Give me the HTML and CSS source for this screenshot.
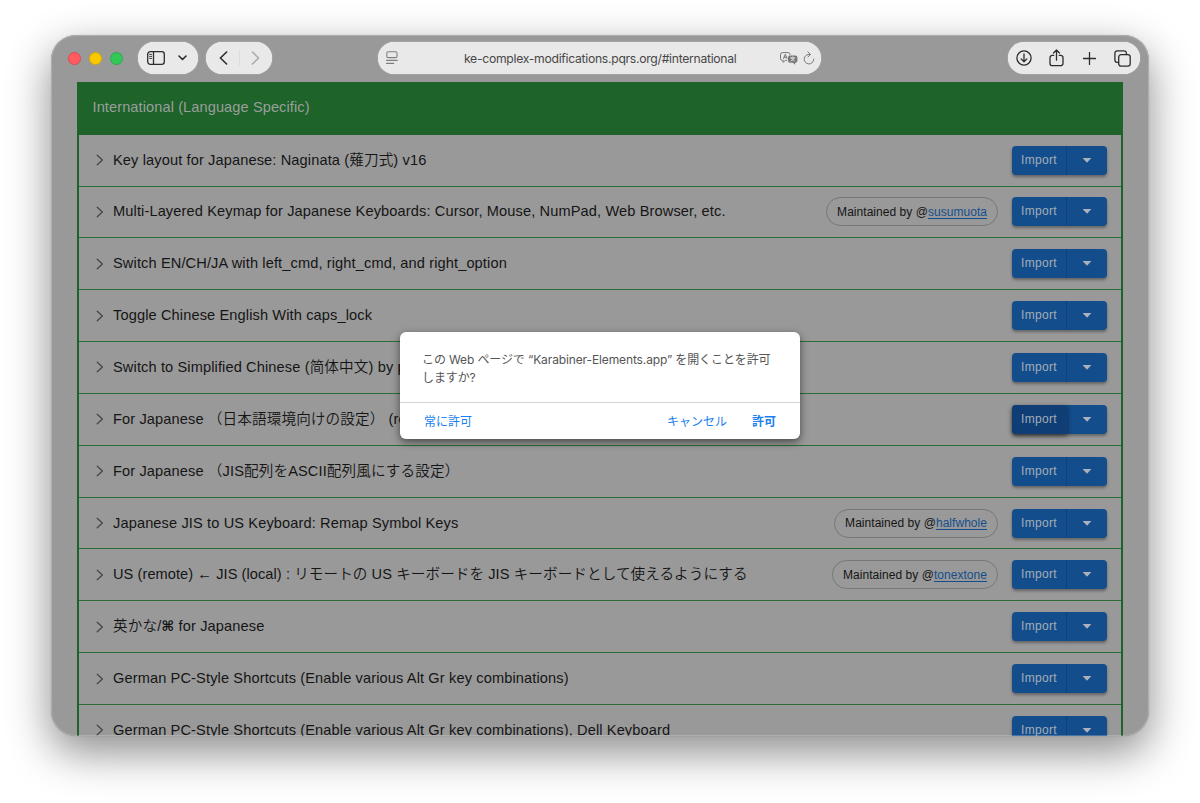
FILE: index.html
```
<!DOCTYPE html>
<html lang="ja">
<head>
    <meta charset="UTF-8">
    <meta name="viewport" content="width=device-width, initial-scale=1.0">
    <title>Karabiner-Elements complex modifications</title>
    <link rel="stylesheet" href="styles.css">
</head>
<body>
    <svg class="sprite" aria-hidden="true">
        <symbol id="chevron" viewBox="0 0 8 12">
            <path d="M1.2 1.2 6.4 6l-5.2 4.8" />
        </symbol>
        <symbol id="caret" viewBox="0 0 10 5">
            <path d="M0.6 0h8.8L5 4.7z" />
        </symbol>
    </svg>

    <div class="window">
        <div class="toolbar">
            <div class="lights">
                <span class="light red"></span>
                <span class="light yellow"></span>
                <span class="light green"></span>
            </div>
            <div class="pill sidebar-pill">
                <svg width="18" height="14" viewBox="0 0 18 14">
                    <rect x="0.7" y="0.7" width="16.6" height="12.6" rx="2.6" />
                    <path d="M6.5 1v12" />
                    <path class="thin" d="M2.6 3.4h2M2.6 5.4h2M2.6 7.4h2" />
                </svg>
                <svg width="9" height="6" viewBox="0 0 9 6"><path class="bold" d="M1 1l3.5 3.5L8 1" /></svg>
            </div>
            <div class="pill nav-pill">
                <svg width="9" height="14" viewBox="0 0 9 14"><path class="bold" d="M7.6 1 1.4 7l6.2 6" /></svg>
                <span class="nav-divider"></span>
                <svg class="disabled" width="9" height="14" viewBox="0 0 9 14"><path class="bold" d="M1.4 1l6.2 6-6.2 6" /></svg>
            </div>
            <div class="pill address">
                <svg class="reader" width="12" height="14" viewBox="0 0 12 14">
                    <rect x="0.8" y="0.8" width="10.2" height="5.8" rx="1.4" />
                    <path d="M0.5 9.4h10.8M0.5 12.4h7.2" />
                </svg>
                <span class="url">ke-complex-modifications.pqrs.org/#international</span>
                <div class="address-icons">
                    <svg width="18" height="13" viewBox="0 0 18 13">
                        <path d="M6.6 8.4H5.2L3.2 10.4V8.4H2.4A1.9 1.9 0 0 1 .5 6.5v-4A1.9 1.9 0 0 1 2.4.6h5.8a1.9 1.9 0 0 1 1.9 1.9M3.6 6.5l1.7-4.2L7 6.5M4.2 5.2h2.2" />
                        <path class="solid" d="M10 3.4h5.4a2 2 0 0 1 2 2v3.4a2 2 0 0 1-2 2h-.3v1.9l-2.2-1.9H10a2 2 0 0 1-2-2V5.4a2 2 0 0 1 2-2z" />
                        <path class="knockout" d="M10.6 5.9h4.2M12.7 5v.9M14 6.1c-.5 1.3-1.6 2.3-3 2.8M11.4 6.1c.5 1.3 1.6 2.3 3 2.8" />
                    </svg>
                    <svg width="12" height="14" viewBox="0 0 12 14">
                        <path d="M6.8 3.4A4.8 4.8 0 1 0 10.8 8.1M4.9.9l2.600 2.500L5 5.900" />
                    </svg>
                </div>
            </div>
            <div class="pill actions">
                <svg width="16" height="16" viewBox="0 0 16 16">
                    <circle cx="8" cy="8" r="7.1" />
                    <path d="M8 4v7.6M5.1 8.900 8 11.800l2.900-2.900" />
                </svg>
                <svg width="15" height="18" viewBox="0 0 15 18">
                    <path d="M4.8 6.3H3.3A2.3 2.3 0 0 0 1 8.6v5.8a2.3 2.3 0 0 0 2.3 2.3h8.4a2.3 2.3 0 0 0 2.3-2.3V8.6a2.3 2.3 0 0 0-2.3-2.3h-1.5M7.5 11.2V1.2M4.5 4l3-3 3 3" />
                </svg>
                <svg width="13" height="13" viewBox="0 0 13 13"><path d="M6.5.5v12M.5 6.5h12" /></svg>
                <svg width="17" height="17" viewBox="0 0 17 17">
                    <rect x="4.7" y="4.7" width="11.5" height="11.5" rx="2.4" />
                    <path d="M4.5 12.3H3.2A2.3 2.3 0 0 1 .9 10V3.2A2.3 2.3 0 0 1 3.2.9h6.9a2.3 2.3 0 0 1 2.3 2.3v1.3" />
                </svg>
            </div>
        </div>

        <div class="category">
            <div class="category-title">International (Language Specific)</div>
            <div class="row">
                <svg class="chevron"><use href="#chevron" /></svg>
                <span class="title">Key layout for Japanese: Naginata (薙刀式) v16</span>
                <div class="btn-group"><span class="import">Import</span><span class="more"><svg><use href="#caret" /></svg></span></div>
            </div>
            <div class="row">
                <svg class="chevron"><use href="#chevron" /></svg>
                <span class="title">Multi-Layered Keymap for Japanese Keyboards: Cursor, Mouse, NumPad, Web Browser, etc.</span>
                <span class="chip">Maintained by @<a>susumuota</a></span>
                <div class="btn-group"><span class="import">Import</span><span class="more"><svg><use href="#caret" /></svg></span></div>
            </div>
            <div class="row">
                <svg class="chevron"><use href="#chevron" /></svg>
                <span class="title">Switch EN/CH/JA with left_cmd, right_cmd, and right_option</span>
                <div class="btn-group"><span class="import">Import</span><span class="more"><svg><use href="#caret" /></svg></span></div>
            </div>
            <div class="row">
                <svg class="chevron"><use href="#chevron" /></svg>
                <span class="title">Toggle Chinese English With caps_lock</span>
                <div class="btn-group"><span class="import">Import</span><span class="more"><svg><use href="#caret" /></svg></span></div>
            </div>
            <div class="row">
                <svg class="chevron"><use href="#chevron" /></svg>
                <span class="title">Switch to Simplified Chinese (简体中文) by p</span>
                <div class="btn-group"><span class="import">Import</span><span class="more"><svg><use href="#caret" /></svg></span></div>
            </div>
            <div class="row">
                <svg class="chevron"><use href="#chevron" /></svg>
                <span class="title">For Japanese （日本語環境向けの設定） (re</span>
                <div class="btn-group"><span class="import active">Import</span><span class="more"><svg><use href="#caret" /></svg></span></div>
            </div>
            <div class="row">
                <svg class="chevron"><use href="#chevron" /></svg>
                <span class="title">For Japanese （JIS配列をASCII配列風にする設定）</span>
                <div class="btn-group"><span class="import">Import</span><span class="more"><svg><use href="#caret" /></svg></span></div>
            </div>
            <div class="row">
                <svg class="chevron"><use href="#chevron" /></svg>
                <span class="title">Japanese JIS to US Keyboard: Remap Symbol Keys</span>
                <span class="chip">Maintained by @<a>halfwhole</a></span>
                <div class="btn-group"><span class="import">Import</span><span class="more"><svg><use href="#caret" /></svg></span></div>
            </div>
            <div class="row">
                <svg class="chevron"><use href="#chevron" /></svg>
                <span class="title tight">US (remote) ← JIS (local) : リモートの US キーボードを JIS キーボードとして使えるようにする</span>
                <span class="chip">Maintained by @<a>tonextone</a></span>
                <div class="btn-group"><span class="import">Import</span><span class="more"><svg><use href="#caret" /></svg></span></div>
            </div>
            <div class="row">
                <svg class="chevron"><use href="#chevron" /></svg>
                <span class="title">英かな/<span class="key">⌘</span> for Japanese</span>
                <div class="btn-group"><span class="import">Import</span><span class="more"><svg><use href="#caret" /></svg></span></div>
            </div>
            <div class="row">
                <svg class="chevron"><use href="#chevron" /></svg>
                <span class="title">German PC-Style Shortcuts (Enable various Alt Gr key combinations)</span>
                <div class="btn-group"><span class="import">Import</span><span class="more"><svg><use href="#caret" /></svg></span></div>
            </div>
            <div class="row">
                <svg class="chevron"><use href="#chevron" /></svg>
                <span class="title">German PC-Style Shortcuts (Enable various Alt Gr key combinations), Dell Keyboard</span>
                <div class="btn-group"><span class="import">Import</span><span class="more"><svg><use href="#caret" /></svg></span></div>
            </div>
        </div>

        <div class="dialog">
            <p class="message"><span class="line">この Web ページで “Karabiner-Elements.app” を開くことを許可</span><span class="line">しますか?</span></p>
            <div class="dialog-buttons">
                <span class="always">常に許可</span>
                <span class="cancel">キャンセル</span>
                <span class="allow">許可</span>
            </div>
        </div>
    </div>
</body>
</html>
```
FILE: styles.css
```
* {
    box-sizing: border-box;
}

body {
    margin: 0;
    padding: 35px 51px 0;
    height: 803px;
    overflow: hidden;
    background-color: #fff;
    font-family: "Liberation Sans", "Noto Sans CJK JP", sans-serif;
}

.sprite {
    position: absolute;
    width: 0;
    height: 0;
}

svg {
    fill: none;
    stroke-linecap: round;
    stroke-linejoin: round;
    flex: none;
}

.window {
    position: relative;
    width: 1098px;
    height: 701px;
    overflow: hidden;
    border-radius: 25px;
    background-color: #999;
    box-shadow: 0 0 1px rgba(0, 0, 0, 0.3), 0 16px 44px rgba(0, 0, 0, 0.46);
}

/* edge highlight of the window */
.window::after {
    content: "";
    position: absolute;
    inset: 0;
    border-radius: 25px;
    box-shadow: inset 0 0 0 1px rgba(255, 255, 255, 0.22);
    pointer-events: none;
}

.toolbar {
    display: flex;
    align-items: center;
    height: 47px;
    padding: 0 9px 1px 17px;
}

.lights {
    display: flex;
    gap: 8px;
    margin-right: 15px;
}

.light {
    width: 13px;
    height: 13px;
    border-radius: 50%;
    border: 1px solid rgba(0, 0, 0, 0.14);
}

.red {
    background-color: #ff5b60;
}

.yellow {
    background-color: #fac800;
}

.green {
    background-color: #33c758;
}

.pill {
    display: flex;
    align-items: center;
    height: 32px;
    border-radius: 16px;
    background-color: #e9e9e9;
    box-shadow: 0 0 1px #fff;
}

.pill svg {
    stroke: #2c2c2c;
    stroke-width: 1.3;
}

.pill .thin {
    stroke-width: 0.9;
}

.pill .bold {
    stroke-width: 1.6;
}

.sidebar-pill {
    width: 60px;
    padding-left: 9px;
    gap: 13px;
    margin-right: 8px;
}

.nav-pill {
    width: 66px;
    padding: 0 12px 0 13px;
    justify-content: space-between;
    margin-right: 106px;
}

.nav-divider {
    width: 1px;
    height: 16px;
    background-color: #dcdcdc;
}

.pill svg.disabled {
    stroke: #aaa;
}

.address {
    width: 443px;
    padding: 0 6px 0 8px;
}

.pill .reader {
    stroke: #808080;
    stroke-width: 1.1;
}

.url {
    flex: 1;
    padding-left: 66px;
    font-family: Inter, sans-serif;
    font-size: 12.2px;
    letter-spacing: -0.29px;
    color: #474747;
    white-space: nowrap;
}

.address-icons {
    display: flex;
    align-items: center;
    gap: 5px;
}

.pill .address-icons svg {
    stroke: #777;
    stroke-width: 1;
}

.pill .address-icons .solid {
    fill: #777;
    stroke: none;
}

.pill .address-icons .knockout {
    stroke: #e9e9e9;
    stroke-width: 0.9;
}

.actions {
    width: 132px;
    margin-left: auto;
    padding: 0 9px 0 8px;
    justify-content: space-between;
}

.actions svg:nth-child(2) {
    margin: 0 1px 1px -1px;
}

.category {
    width: 1046px;
    margin-left: 26px;
    border: solid #1d632a;
    border-width: 0 2px;
}

.category-title {
    display: flex;
    align-items: center;
    height: 52.7px;
    padding: 0 0 2px 13.5px;
    background-color: #1d632a;
    color: #9a9f9a;
    font-size: 14.6px;
    letter-spacing: 0.09px;
}

.row {
    display: flex;
    align-items: center;
    height: 51.85px;
    padding: 0 14px 0 17px;
    border-bottom: 1px solid #2a6c37;
    color: #151515;
}

.chevron {
    width: 8px;
    height: 12px;
    margin-right: 9px;
    stroke: #444;
    stroke-width: 1.2;
}

.title {
    flex: 1;
    padding-bottom: 1px;
    font-size: 14.6px;
    font-weight: 350;
    line-height: 20px;
    letter-spacing: 0.12px;
    white-space: nowrap;
}

.title.tight {
    letter-spacing: 0.07px;
}

.key {
    font-family: "DejaVu Sans", sans-serif;
    font-size: 14px;
    font-weight: 700;
}

.chip {
    display: flex;
    align-items: center;
    height: 29px;
    padding: 0 10px;
    margin-right: 14px;
    border: 1px solid #777;
    border-radius: 15px;
    font-size: 12px;
    letter-spacing: 0.04px;
}

.chip a {
    color: #144e8c;
    text-decoration: underline;
    text-underline-offset: 2px;
}

.btn-group {
    display: flex;
    width: 95px;
    height: 29px;
    border-radius: 4px;
    background-color: #144d8b;
    box-shadow: 0 2px 3px rgba(0, 0, 0, 0.35);
}

.import {
    width: 55px;
    padding-left: 9px;
    border-right: 1px solid #104078;
    line-height: 28px;
    font-size: 12px;
    letter-spacing: 0.3px;
    color: #a3adb8;
}

.import.active {
    border-radius: 4px 0 0 4px;
    background-color: #0f3d75;
    box-shadow: 0 2px 5px rgba(0, 0, 0, 0.5);
}

.more {
    display: flex;
    flex: 1;
    align-items: center;
    justify-content: center;
}

.more svg {
    width: 10px;
    height: 5px;
    fill: #a9b2bd;
}

/* confirmation sheet over the page */
.dialog {
    position: absolute;
    left: 349px;
    top: 297px;
    width: 400px;
    height: 107px;
    border-radius: 6px;
    background-color: #fff;
    box-shadow: 0 3px 9px rgba(0, 0, 0, 0.55);
    font-family: Inter, "Noto Sans CJK JP", sans-serif;
    font-size: 12px;
}

.message {
    height: 71px;
    margin: 0;
    padding: 19px 22px 0;
    border-bottom: 1px solid #d4d4d4;
    color: #555;
}

.line {
    display: block;
    line-height: 18px;
    letter-spacing: -0.12px;
    white-space: nowrap;
}

.dialog-buttons {
    display: flex;
    align-items: center;
    height: 36px;
    padding: 0 24px 1px;
    color: #1a7ff0;
}

.cancel {
    margin-left: auto;
    margin-right: 25px;
}

.allow {
    font-weight: 700;
}
```
